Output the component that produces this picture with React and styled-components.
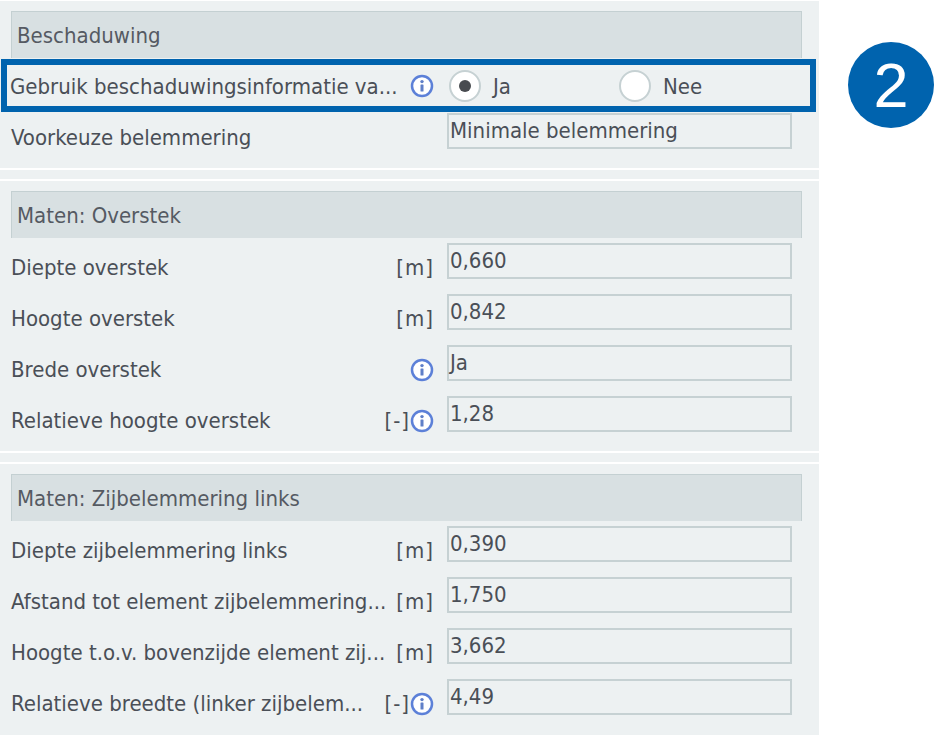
import React from "react";
import styled, { createGlobalStyle } from "styled-components";

const Global = createGlobalStyle`
  html, body { margin: 0; padding: 0; background: #fff; }
  body { font-family: "DejaVu Sans Condensed", "DejaVu Sans", Tahoma, sans-serif; color: #4a4f57; overflow: hidden; }
`;
const Page = styled.div`
  position: relative;
  width: 935px;
  height: 735px;
  padding-top: 1px;
  box-sizing: border-box;
  overflow: hidden;
`;
const Sheet = styled.div`
  width: 819px;
  background: #edf1f2;
  display: flex;
  flex-direction: column;
`;
const Panel = styled.section`
  padding: ${(p) => p.$top}px 17px ${(p) => p.$bottom}px 11px;
  display: flex;
  flex-direction: column;
`;
const Divider = styled.div`
  height: 13px;
  box-sizing: border-box;
  border-top: 2px solid #fff;
  border-bottom: 2px solid #fff;
`;
const Header = styled.h2`
  margin: 0;
  height: 47px;
  box-sizing: border-box;
  padding: 1px 6px 0 5px;
  display: flex;
  align-items: center;
  background: #d8e0e2;
  border: 1px solid #c4d0d2;
  border-bottom: 0;
  font-size: 22px;
  font-weight: 400;
  color: #555a62;
`;
const Rows = styled.div`
  display: flex;
  flex-direction: column;
  padding-top: ${(p) => p.$top || 0}px;
`;
const Row = styled.div`
  height: 51px;
  display: flex;
  align-items: flex-start;
`;
const Label = styled.span`
  flex: 1;
  min-width: 0;
  margin-top: 10px;
  font-size: 22px;
  line-height: 29px;
  white-space: nowrap;
`;
const Suffix = styled.span`
  margin-top: 10px;
  height: 29px;
  flex: none;
  display: flex;
  justify-content: flex-end;
  align-items: center;
  font-size: 22px;
  line-height: 29px;
  letter-spacing: 1px;
  padding-right: 13px;
`;
const Field = styled.div`
  width: 345px;
  height: 36px;
  flex: none;
  margin-right: 10px;
  box-sizing: border-box;
  border: 2px solid #c6d1d3;
  padding: 0 1px;
  font-size: 22px;
  line-height: 31px;
  white-space: nowrap;
`;
const Highlight = styled.div`
  margin: 1px -14px 0 -10px;
  height: 53px;
  box-sizing: border-box;
  border: 6px solid #0063ae;
  padding-left: 3px;
  display: flex;
  align-items: center;
  font-size: 22px;
  line-height: 29px;
  white-space: nowrap;
`;
const HighlightLabel = styled.span`
  width: 424px;
  flex: none;
  display: flex;
  justify-content: space-between;
  align-items: center;
`;
const HighlightText = styled.span`
  padding-top: 2px;
`;
const RadioGroup = styled.div`
  display: flex;
  align-items: center;
  margin-left: 15px;
`;
const RadioItem = styled.label`
  width: 170px;
  display: flex;
  align-items: center;
  gap: 12px;
`;
const RadioCircle = styled.span`
  width: 32px;
  height: 32px;
  flex: none;
  box-sizing: border-box;
  border-radius: 50%;
  border: 2px solid #c6d1d3;
  background: #fff;
  display: flex;
  align-items: center;
  justify-content: center;
  &::after {
    content: "";
    display: ${(p) => (p.$on ? "block" : "none")};
    width: 12px;
    height: 12px;
    border-radius: 50%;
    background: #484b50;
  }
`;
const Badge = styled.div`
  position: absolute;
  left: 848px;
  top: 42px;
  width: 86px;
  height: 86px;
  border-radius: 50%;
  background: #0063ae;
  color: #fff;
  display: flex;
  align-items: center;
  justify-content: center;
  font-family: "Liberation Sans", Arial, sans-serif;
  font-size: 63px;
  line-height: 1;
`;
const InfoSvg = styled.svg`
  width: 24px;
  height: 24px;
  flex: none;
  display: block;
`;

const Info = () => (
  <InfoSvg viewBox="0 0 24 24">
    <circle cx="12" cy="12" r="10" fill="#fff" stroke="#5c80d8" strokeWidth="2.5" />
    <circle cx="12" cy="7.6" r="1.7" fill="#5f7fc8" />
    <rect x="10.5" y="10.4" width="3" height="7.2" rx="0.6" fill="#5f7fc8" />
  </InfoSvg>
);

const FieldRow = ({ label, unit, info, value }) => (
  <Row>
    <Label>{label}</Label>
    <Suffix>
      {unit}
      {info && <Info />}
    </Suffix>
    <Field>{value}</Field>
  </Row>
);

export default function App() {
  return (
    <Page>
      <Global />
      <Sheet>
        <Panel $top={10} $bottom={4}>
          <Header>Beschaduwing</Header>
          <Highlight>
            <HighlightLabel>
              <HighlightText>Gebruik beschaduwingsinformatie va...</HighlightText>
              <Info />
            </HighlightLabel>
            <RadioGroup>
              <RadioItem>
                <RadioCircle $on />
                <HighlightText>Ja</HighlightText>
              </RadioItem>
              <RadioItem>
                <RadioCircle />
                <HighlightText>Nee</HighlightText>
              </RadioItem>
            </RadioGroup>
          </Highlight>
          <Rows $top={1}>
            <Row>
              <Label>Voorkeuze belemmering</Label>
              <Field>Minimale belemmering</Field>
            </Row>
          </Rows>
        </Panel>
        <Divider />
        <Panel $top={10} $bottom={4}>
          <Header>Maten: Overstek</Header>
          <Rows $top={5}>
            <FieldRow label="Diepte overstek" unit="[m]" value="0,660" />
            <FieldRow label="Hoogte overstek" unit="[m]" value="0,842" />
            <FieldRow label="Brede overstek" info value="Ja" />
            <FieldRow label="Relatieve hoogte overstek" unit="[-]" info value="1,28" />
          </Rows>
        </Panel>
        <Divider />
        <Panel $top={10} $bottom={20}>
          <Header>Maten: Zijbelemmering links</Header>
          <Rows $top={5}>
            <FieldRow label="Diepte zijbelemmering links" unit="[m]" value="0,390" />
            <FieldRow label="Afstand tot element zijbelemmering..." unit="[m]" value="1,750" />
            <FieldRow label="Hoogte t.o.v. bovenzijde element zij..." unit="[m]" value="3,662" />
            <FieldRow label="Relatieve breedte (linker zijbelem..." unit="[-]" info value="4,49" />
          </Rows>
        </Panel>
      </Sheet>
      <Badge>2</Badge>
    </Page>
  );
}
